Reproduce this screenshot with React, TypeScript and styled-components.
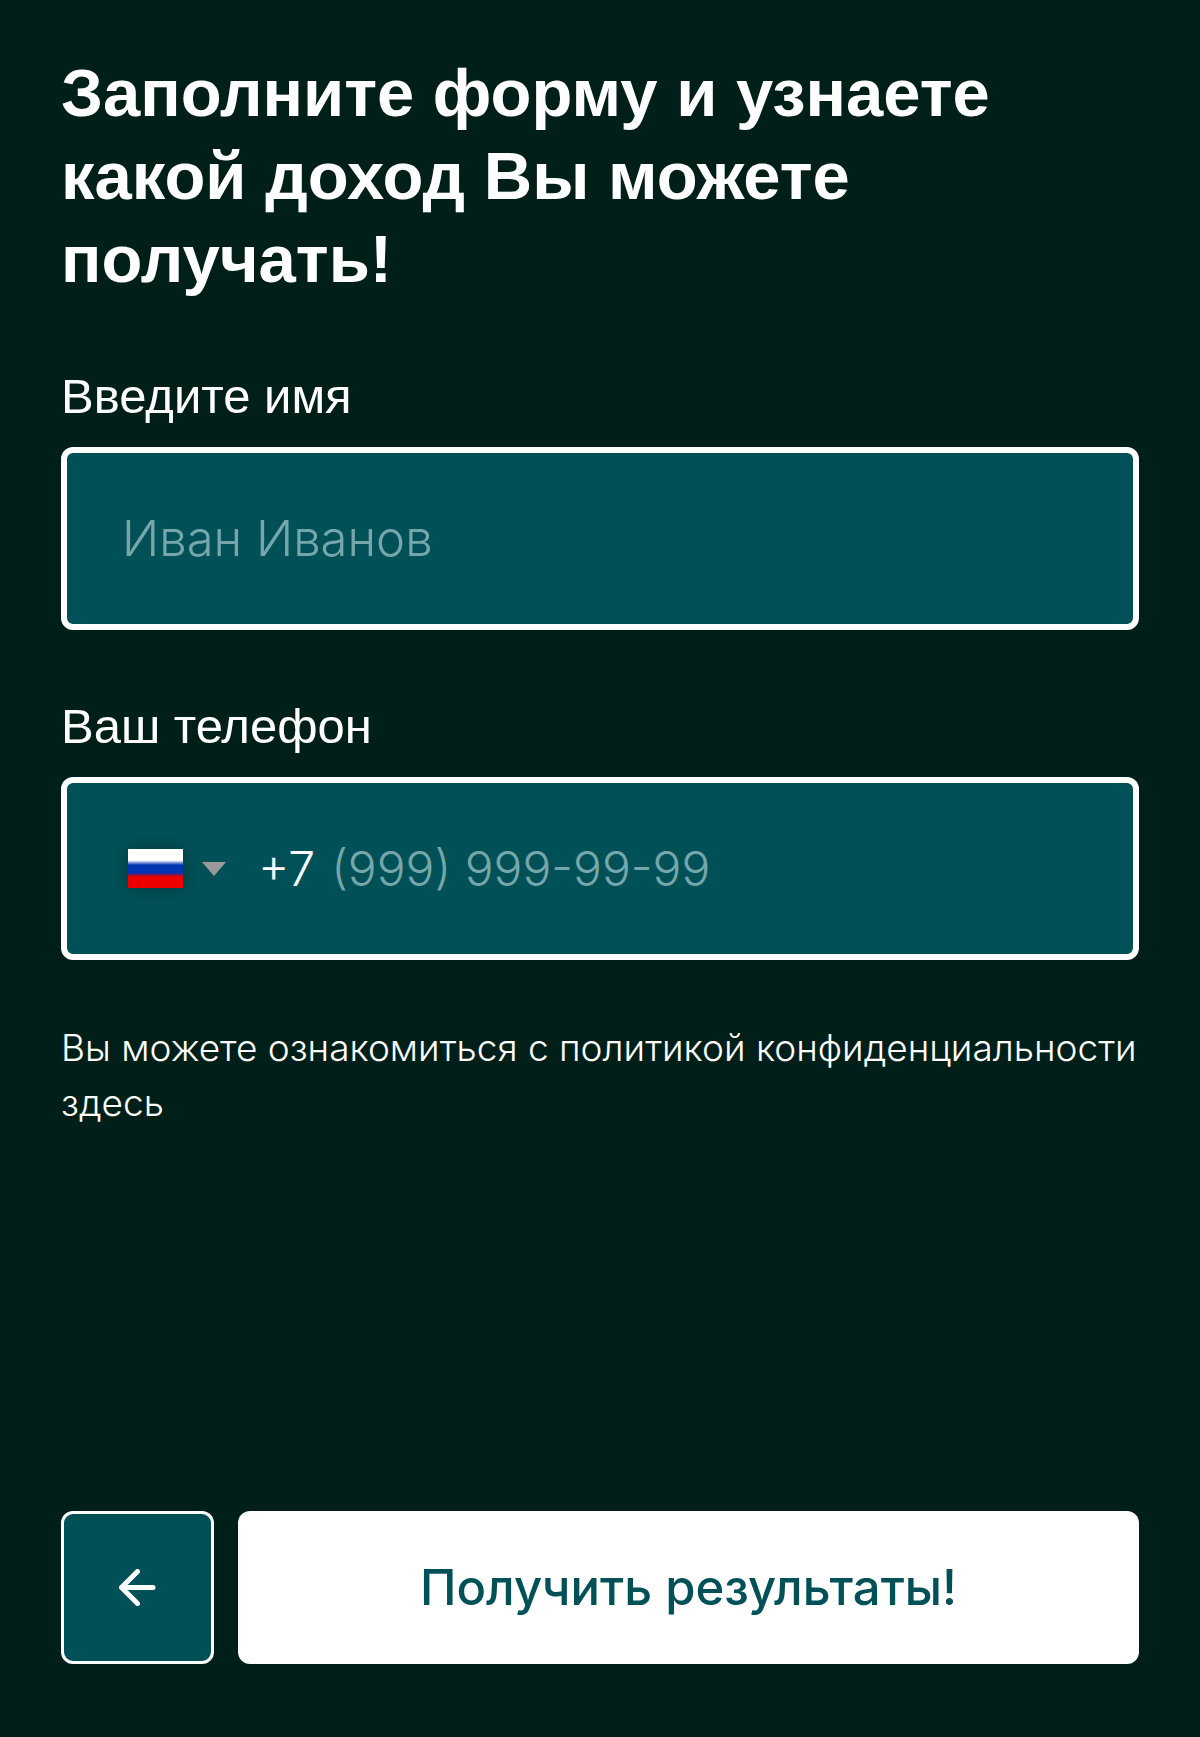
import React from "react";
import styled, { createGlobalStyle } from "styled-components";

const colors = {
  page: "#001f19",
  field: "#005157",
  hint: "#74a6aa",
  caret: "#999999",
  light: "#ffffff",
};

const headingFont = `"Liberation Sans", Arial, sans-serif`;
const bodyFont = `Inter, "Open Sans", sans-serif`;

const GlobalStyle = createGlobalStyle`
  *, *::before, *::after { box-sizing: border-box; }
  body {
    margin: 0;
    background: ${colors.page};
    color: ${colors.light};
    font-family: ${bodyFont};
  }
`;

const Page = styled.form`
  display: flex;
  flex-direction: column;
  min-height: 100vh;
  padding: 51px 61px 73px;
`;

const Title = styled.h1`
  margin: 0 0 64px;
  font: 700 67px/83px ${headingFont};
`;

const Fields = styled.div`
  display: flex;
  flex-direction: column;
  gap: 64px;
  margin-bottom: 60px;
`;

const Field = styled.div`
  display: flex;
  flex-direction: column;
  gap: 19px;
`;

const Label = styled.label`
  font: 400 49px/64px ${headingFont};
`;

const Control = styled.div`
  display: flex;
  align-items: center;
  height: 183px;
  padding: 0 55px;
  border: 6px solid ${colors.light};
  border-radius: 12px;
  background: ${colors.field};
`;

const Input = styled.input<{ $size?: number }>`
  flex: 1;
  min-width: 0;
  height: 100%;
  padding: 0;
  border: 0;
  outline: 0;
  background: transparent;
  color: ${colors.light};
  font: 300 ${({ $size = 49 }) => $size}px/60px ${bodyFont};

  &::placeholder {
    color: ${colors.hint};
    opacity: 1;
  }
`;

const Country = styled.div`
  position: relative;
  display: flex;
  align-items: center;
  gap: 19px;
  margin: 0 32px 0 6px;
`;

const CountrySelect = styled.select`
  position: absolute;
  inset: 0;
  width: 100%;
  opacity: 0;
  cursor: pointer;
`;

const Flag = styled.span`
  width: 55px;
  height: 39px;
  background: linear-gradient(#ffffff 29%, #0033b0 41%, #0033b0 61%, #ee0000 71%);
  box-shadow: 0 0 18px rgba(0, 0, 0, 0.3);
`;

const Caret = styled.svg`
  width: 24px;
  height: 14px;
  fill: ${colors.caret};
`;

const DialCode = styled.span`
  margin-right: 16px;
  font: 300 48px/60px ${bodyFont};
`;

const Policy = styled.p`
  margin: 0;
  font: 300 37px/55px ${bodyFont};
`;

const PolicyLink = styled.a`
  color: inherit;
  text-decoration: none;
`;

const Actions = styled.div`
  display: flex;
  gap: 24px;
  margin-top: auto;
`;

const BackButton = styled.button`
  display: grid;
  place-items: center;
  width: 153px;
  height: 153px;
  padding: 0;
  border: 3px solid ${colors.light};
  border-radius: 12px;
  background: ${colors.field};
  color: ${colors.light};
  cursor: pointer;
`;

const BackIcon = styled.svg`
  width: 37px;
  height: 37px;
  fill: none;
  stroke: currentColor;
  stroke-width: 5;
  stroke-linecap: round;
  stroke-linejoin: round;
`;

const SubmitButton = styled.button`
  flex: 1;
  height: 153px;
  border: 0;
  border-radius: 12px;
  background: ${colors.light};
  color: ${colors.field};
  font: 500 49px/60px ${bodyFont};
  cursor: pointer;
`;

export default function App() {
  return (
    <>
      <GlobalStyle />
      <Page onSubmit={(event: React.FormEvent) => event.preventDefault()}>
        <Title>Заполните форму и узнаете какой доход Вы можете получать!</Title>

        <Fields>
          <Field>
            <Label htmlFor="name">Введите имя</Label>
            <Control>
              <Input id="name" type="text" placeholder="Иван Иванов" />
            </Control>
          </Field>

          <Field>
            <Label htmlFor="phone">Ваш телефон</Label>
            <Control>
              <Country>
                <Flag />
                <Caret viewBox="0 0 24 14" aria-hidden="true">
                  <path d="M0 0H24L12 14Z" />
                </Caret>
                <CountrySelect aria-label="Страна" defaultValue="ru">
                  <option value="ru">+7</option>
                </CountrySelect>
              </Country>
              <DialCode>+7</DialCode>
              <Input id="phone" type="tel" placeholder="(999) 999-99-99" $size={48} />
            </Control>
          </Field>
        </Fields>

        <Policy>
          Вы можете ознакомиться с политикой конфиденциальности{" "}
          <PolicyLink href="#policy">здесь</PolicyLink>
        </Policy>

        <Actions>
          <BackButton type="button" aria-label="Назад">
            <BackIcon viewBox="0 0 37 37" aria-hidden="true">
              <path d="M34 18.5H3M18.5 2.5L2.5 18.5L18.5 34.5" />
            </BackIcon>
          </BackButton>
          <SubmitButton type="submit">Получить результаты!</SubmitButton>
        </Actions>
      </Page>
    </>
  );
}
